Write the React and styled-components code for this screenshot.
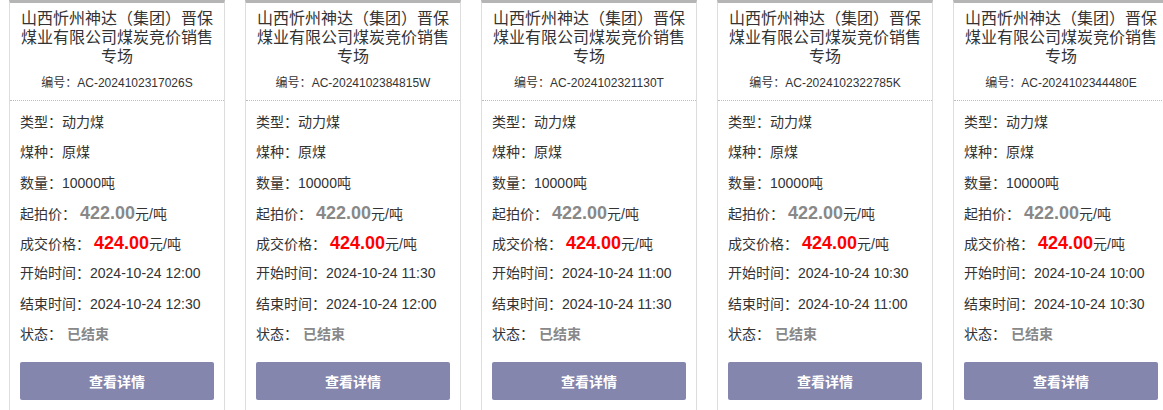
import styled, { createGlobalStyle } from 'styled-components';

const GlobalStyle = createGlobalStyle`
  body {
    margin: 0;
    background: #fff;
    font-family: "Liberation Sans", "Noto Sans CJK SC", sans-serif;
    color: #333;
  }
`;

const Page = styled.div`
  display: flex;
  gap: 20px;
  padding-left: 9px;
  width: 1163px;
  height: 410px;
  overflow: hidden;
  box-sizing: border-box;
`;

const Card = styled.div`
  flex: 0 0 216px;
  box-sizing: border-box;
  border: 1px solid #ddd;
  border-top: 3px solid #b5b5b5;
  height: 430px;
  background: #fff;
`;

const Header = styled.div`
  padding: 6px 10px 7px;
  border-bottom: 1px dotted #bbb;
  text-align: center;
`;

const Title = styled.div`
  font-size: 16px;
  line-height: 19px;
  color: #333;
`;

const Code = styled.div`
  margin-top: 7px;
  font-size: 12px;
  line-height: 20px;
  color: #333;
`;

const Body = styled.div`
  padding: 6px 10px 0;
`;

const Row = styled.div`
  font-size: 14px;
  line-height: 30.3px;
  height: 30.3px;
  white-space: nowrap;
  color: #333;
`;

const Price = styled.span`
  margin-left: 4px;
  font-size: 18px;
  font-weight: bold;
  color: ${(p) => (p.$deal ? '#ff0000' : '#888')};
`;

const Status = styled.span`
  margin-left: 5px;
  font-weight: bold;
  color: #888;
`;

const Button = styled.button`
  display: block;
  width: 100%;
  height: 38px;
  margin-top: 13px;
  border: none;
  border-radius: 2px;
  background: #8486ad;
  color: #fff;
  font-family: inherit;
  font-size: 14px;
  font-weight: bold;
  cursor: pointer;
`;

const items = [
  { code: 'AC-2024102317026S', start: '12:00', end: '12:30' },
  { code: 'AC-2024102384815W', start: '11:30', end: '12:00' },
  { code: 'AC-2024102321130T', start: '11:00', end: '11:30' },
  { code: 'AC-2024102322785K', start: '10:30', end: '11:00' },
  { code: 'AC-2024102344480E', start: '10:00', end: '10:30' },
];

export default function App() {
  return (
    <>
      <GlobalStyle />
      <Page>
        {items.map((it) => (
          <Card key={it.code}>
            <Header>
              <Title>山西忻州神达（集团）晋保煤业有限公司煤炭竞价销售专场</Title>
              <Code>编号：{it.code}</Code>
            </Header>
            <Body>
              <Row>类型：动力煤</Row>
              <Row>煤种：原煤</Row>
              <Row>数量：10000吨</Row>
              <Row>
                起拍价：<Price>422.00</Price>元/吨
              </Row>
              <Row>
                成交价格：<Price $deal>424.00</Price>元/吨
              </Row>
              <Row>开始时间：2024-10-24 {it.start}</Row>
              <Row>结束时间：2024-10-24 {it.end}</Row>
              <Row>
                状态：<Status>已结束</Status>
              </Row>
              <Button>查看详情</Button>
            </Body>
          </Card>
        ))}
      </Page>
    </>
  );
}
